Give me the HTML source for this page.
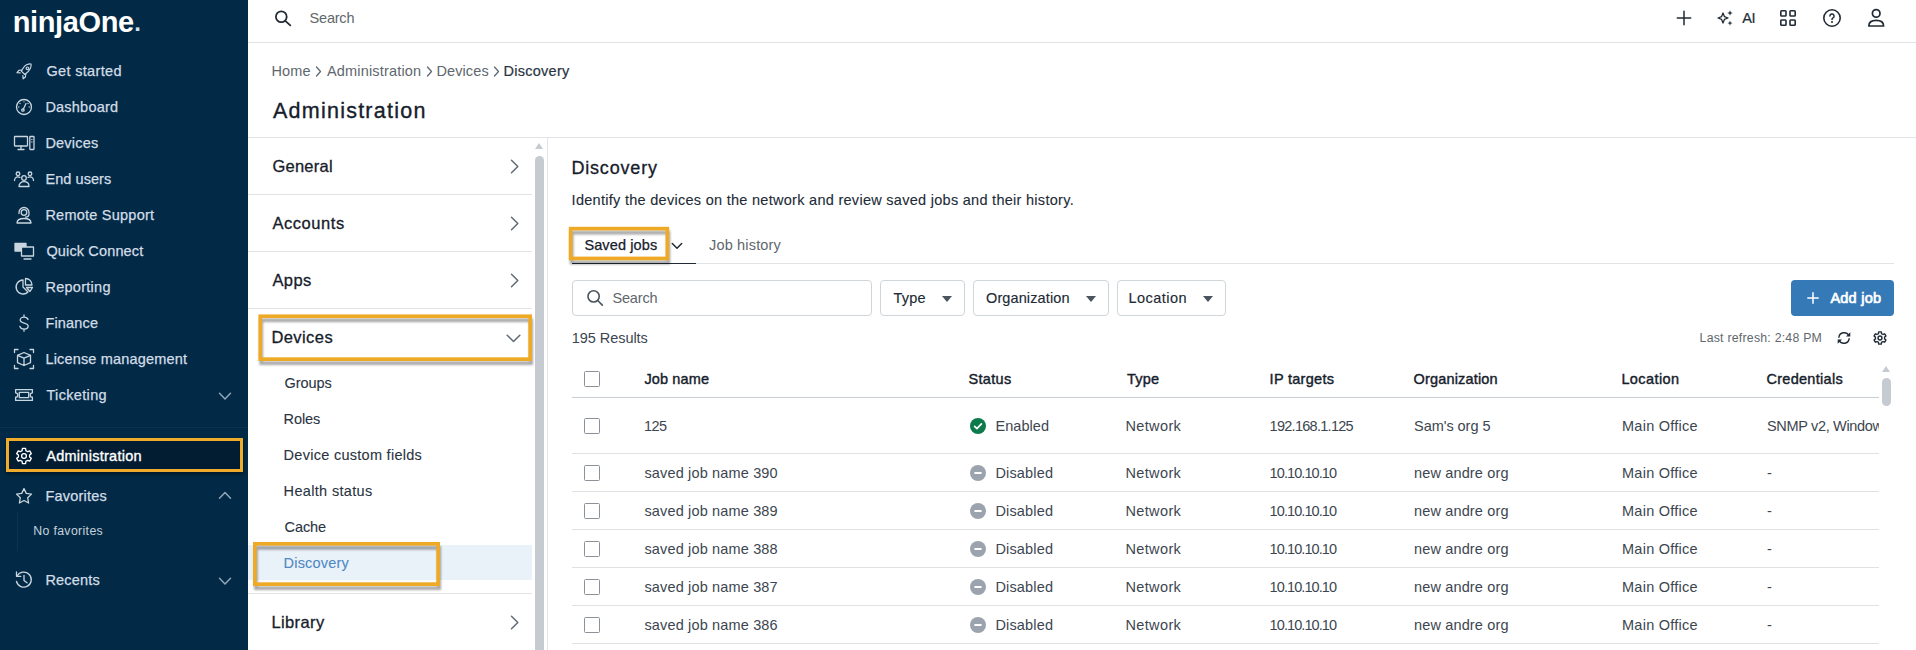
<!DOCTYPE html>
<html lang="en"><head><meta charset="utf-8"><title>Discovery - Administration</title>
<style>
*{box-sizing:border-box;margin:0;padding:0}
html,body{width:1916px;height:650px;overflow:hidden;background:#fff}
body{font-family:"Liberation Sans",Arial,sans-serif;color:#212b36;position:relative;font-size:14.5px}
.t{position:absolute;white-space:nowrap;line-height:20px;height:20px}
.a{position:absolute}
#side{position:absolute;left:0;top:0;width:248px;height:650px;background:#022a46}
.ico{position:absolute;left:13px;width:22px;height:22px;stroke:#c9d6e0;fill:none;stroke-width:1.3;stroke-linecap:round;stroke-linejoin:round}
.chev{position:absolute;fill:none;stroke-width:1.5;stroke-linecap:round;stroke-linejoin:round}
.hico{position:absolute;stroke:#212b36;fill:none;stroke-width:1.6;stroke-linecap:round;stroke-linejoin:round}
.line{position:absolute;background:#e1e3e6;height:1px}
.hls{position:absolute;overflow:visible;filter:drop-shadow(1.5px 4.5px 1.2px rgba(0,0,0,.34))}
.cb{position:absolute;left:584px;width:16px;height:16px;border:1px solid #8a9199;border-radius:1.5px;background:#fff}
.rl{position:absolute;left:572px;width:1307px;height:1px;background:#dfe1e4}
.dd{position:absolute;top:280px;height:36px;border:1px solid #d0d5da;border-radius:4px;background:#fff}
.dd i{position:absolute;right:12px;top:15px;border-left:5px solid transparent;border-right:5px solid transparent;border-top:6px solid #4a545e}
</style></head><body>
<div id="side">
<svg class="ico" style="top:60px" viewBox="0 0 22 22"><g transform="translate(11.300 11.500) scale(.9) translate(-11 -11)"><path d="M13.5 3.500c3-1.200 5-.8 5-.8s.5 2.200-.8 5c-1.200 2.600-4 5.300-6.200 6.600l-3.800-3.800c1.300-2.200 3.200-5.800 5.800-7z"/><circle cx="14.500" cy="7.500" r="1.500"/><path d="M8.500 9.300l-3.600.5-2 2.500 3.500.3M12.700 13.500l-.5 3.600-2.500 2-.3-3.500"/></g></svg>
<svg class="ico" style="top:96px" viewBox="0 0 22 22"><circle cx="11" cy="11" r="7.500"/><path d="M10.300 13.200l2.700-5.700"/><circle cx="9.900" cy="14" r="1.200"/><path d="M5.800 11h.01M7 7.500h.01M11 5.800h.01M16.200 11h.01M15 7.500h.01"/></svg>
<svg class="ico" style="top:132px" viewBox="0 0 22 22"><rect x="1.500" y="4.500" width="13" height="9.500" rx="0.500"/><path d="M5 17.500h6M8 14v3.500"/><rect x="16.800" y="4.500" width="4.200" height="13" rx="0.500"/><path d="M18.900 7.500h.01M18.900 10h.01"/></svg>
<svg class="ico" style="top:168px" viewBox="0 0 22 22"><circle cx="11" cy="10" r="2.300"/><path d="M6 18.500c0-3 2.200-4.800 5-4.800s5 1.800 5 4.800z"/><circle cx="5" cy="5.800" r="1.800"/><circle cx="17" cy="5.800" r="1.800"/><path d="M1.500 12.500c0-2 1.500-3.700 3.500-3.700 .8 0 1.500.2 2 .6M20.500 12.500c0-2-1.500-3.700-3.500-3.700-.8 0-1.500.2-2 .6"/></svg>
<svg class="ico" style="top:204px" viewBox="0 0 22 22"><circle cx="11" cy="8.500" r="2.800"/><path d="M6 9.500v-1a5 5 0 0 1 10 0v1M16 10c0 2-1.500 3-3.500 3.200"/><path d="M4 19c0-3 3-4.500 7-4.500s7 1.500 7 4.500z"/></svg>
<svg class="ico" style="top:240px" viewBox="0 0 22 22"><rect x="2" y="3.500" width="11" height="7.500" fill="#c9d6e0"/><rect x="8.500" y="7" width="12" height="9" fill="#022a46"/><path d="M11 19h7"/></svg>
<svg class="ico" style="top:276px" viewBox="0 0 22 22"><path d="M10 4a7 7 0 1 0 5 12l-5-5z"/><path d="M12.500 2.500v6.500h6.500a6.500 6.500 0 0 0-6.500-6.500zM13.500 11.500h6l-2.500 4z"/></svg>
<svg class="ico" style="top:312px" viewBox="0 0 22 22"><path d="M15 7.500c-.5-1.500-2-2.300-4-2.300-2.200 0-3.800 1.100-3.800 2.900 0 4 8 2 8 6 0 1.800-1.700 3-4 3-2.200 0-3.800-1-4.300-2.700M11 3v2.200M11 17v2.200"/></svg>
<svg class="ico" style="top:348px" viewBox="0 0 22 22"><path d="M1.500 4.500v-3h3.500M17 1.500h3.500v3M20.500 17.500v3h-3.500M5 20.500h-3.500v-3"/><path d="M11 4.500l6.500 2.800v7.400l-6.500 2.800-6.500-2.800v-7.400zM4.500 7.300l6.500 2.900 6.500-2.900M11 10.200v7.300"/></svg>
<svg class="ico" style="top:384px" viewBox="0 0 22 22"><path d="M2.600 5.600h16.800v3.200a2.200 2.200 0 0 0 0 4.400v3.200h-16.800v-3.200a2.200 2.200 0 0 0 0-4.400z"/><rect x="6.300" y="8.300" width="9.400" height="5.400"/></svg>
<svg class="chev" style="left:218px;top:392px;width:14px;height:8.500px;stroke:#8fa6b8" viewBox="0 0 14 8.500"><path d="M1.500 1.300l5.500 5.700 5.500-5.700"/></svg>
<div class="a" style="left:0;top:427px;width:248px;height:1px;background:#17395280"></div>
<div class="a" style="left:6px;top:438px;width:237px;height:34px;border:3.400px solid #efab2b;background:#021c31;box-shadow:0 2px 4px rgba(0,0,0,.5)"></div>
<svg class="ico" style="top:445px;stroke:#fff" viewBox="0 0 22 22"><path d="M12.86 5.61 L12.60 3.47 L9.40 3.47 L9.14 5.61 L7.26 6.70 L5.28 5.85 L3.68 8.62 L5.40 9.91 L5.40 12.09 L3.68 13.38 L5.28 16.15 L7.26 15.30 L9.14 16.39 L9.40 18.53 L12.60 18.53 L12.86 16.39 L14.74 15.30 L16.72 16.15 L18.32 13.38 L16.60 12.09 L16.60 9.91 L18.32 8.62 L16.72 5.85 L14.74 6.70z"/><circle cx="11" cy="11" r="2.400"/></svg>
<svg class="ico" style="top:485px" viewBox="0 0 22 22"><path d="M11 3.600l2.300 4.800 5.200.7-3.800 3.700.9 5.200-4.600-2.500-4.600 2.500.9-5.200-3.800-3.700 5.200-.7z"/></svg>
<svg class="chev" style="left:218px;top:491px;width:14px;height:8.500px;stroke:#8fa6b8" viewBox="0 0 14 8.500"><path d="M1.500 7.200l5.500-5.700 5.500 5.700"/></svg>
<div class="a" style="left:17px;top:512px;width:1px;height:39px;background:#10334c"></div>
<svg class="ico" style="top:569px" viewBox="0 0 22 22"><path d="M4.200 7a7.500 7.500 0 1 1-.7 5.500"/><path d="M3.500 3v4.300h4.300M11 6.500v5l3 2.300"/></svg>
<svg class="chev" style="left:218px;top:577px;width:14px;height:8.500px;stroke:#8fa6b8" viewBox="0 0 14 8.500"><path d="M1.500 1.300l5.500 5.700 5.500-5.700"/></svg>
</div>
<div class="line" style="left:248px;top:42px;width:1668px"></div>
<svg class="hico" style="left:273px;top:9px;width:20px;height:20px;stroke-width:1.800" viewBox="0 0 20 20"><circle cx="8.300" cy="7.800" r="5.400"/><path d="M12.300 11.800l5 4.600"/></svg>
<svg class="hico" style="left:1676px;top:10px;width:16px;height:16px;stroke-width:1.500" viewBox="0 0 16 16"><path d="M8 1.300v13.400M1.300 8h13.400"/></svg>
<svg class="hico" style="left:1716px;top:9px;width:18px;height:18px;stroke-width:1.300" viewBox="0 0 18 18"><path d="M7 4l1.400 3.600 3.600 1.400-3.600 1.400-1.400 3.600-1.400-3.600-3.600-1.400 3.600-1.400z"/><path d="M14 1.200l.75 2.050 2.050.75-2.050.75-.75 2.050-.75-2.050-2.050-.75 2.050-.75zM14 11.500l.7 1.900 1.900.7-1.900.7-.7 1.900-.7-1.900-1.900-.7 1.900-.7z" fill="#212b36" stroke="none"/></svg>
<svg class="hico" style="left:1779px;top:9px;width:18px;height:18px;stroke-width:1.600" viewBox="0 0 18 18"><rect x="1.800" y="1.800" width="5.200" height="5.200" rx="0.800"/><rect x="11" y="1.800" width="5.200" height="5.200" rx="0.800"/><rect x="1.800" y="11" width="5.200" height="5.200" rx="0.800"/><rect x="11" y="11" width="5.200" height="5.200" rx="0.800"/></svg>
<svg class="hico" style="left:1822px;top:8px;width:20px;height:20px;stroke-width:1.600" viewBox="0 0 20 20"><circle cx="10" cy="10" r="8.200"/><path d="M7.900 8a2.100 2.100 0 1 1 3.100 1.900c-.7.400-1 .8-1 1.500" stroke-width="1.500"/><circle cx="10" cy="13.900" r="1" fill="#212b36" stroke="none"/></svg>
<svg class="hico" style="left:1866px;top:8px;width:20px;height:20px;stroke-width:1.700" viewBox="0 0 20 20"><circle cx="10.200" cy="5.400" r="3.800"/><path d="M2.800 18c0-3.600 3-5.600 7.400-5.600s7.400 2 7.400 5.600z"/></svg>
<svg class="chev" style="left:315px;top:66px;width:7px;height:11px;stroke:#5f6a75;stroke-width:1.300" viewBox="0 0 7 11"><path d="M1.500 1l4 4.500-4 4.500"/></svg>
<svg class="chev" style="left:426px;top:66px;width:7px;height:11px;stroke:#5f6a75;stroke-width:1.300" viewBox="0 0 7 11"><path d="M1.500 1l4 4.500-4 4.500"/></svg>
<svg class="chev" style="left:493px;top:66px;width:7px;height:11px;stroke:#5f6a75;stroke-width:1.300" viewBox="0 0 7 11"><path d="M1.500 1l4 4.500-4 4.500"/></svg>
<div class="line" style="left:248px;top:137px;width:1668px"></div>
<svg class="chev" style="left:510px;top:159px;width:10px;height:15px;stroke:#5f6a75" viewBox="0 0 10 15"><path d="M1.500 1.200l6.300 6.300-6.300 6.300"/></svg>
<svg class="chev" style="left:510px;top:216px;width:10px;height:15px;stroke:#5f6a75" viewBox="0 0 10 15"><path d="M1.500 1.200l6.300 6.300-6.300 6.300"/></svg>
<svg class="chev" style="left:510px;top:273px;width:10px;height:15px;stroke:#5f6a75" viewBox="0 0 10 15"><path d="M1.500 1.200l6.300 6.300-6.300 6.300"/></svg>
<svg class="chev" style="left:510px;top:615px;width:10px;height:15px;stroke:#5f6a75" viewBox="0 0 10 15"><path d="M1.500 1.200l6.300 6.300-6.300 6.300"/></svg>
<svg class="chev" style="left:506px;top:333.500px;width:15px;height:9px;stroke:#5f6a75" viewBox="0 0 15 9"><path d="M1.200 1.200l6.300 6.300 6.300-6.300"/></svg>
<div class="line" style="left:248px;top:194px;width:284px"></div>
<div class="line" style="left:248px;top:251px;width:284px"></div>
<div class="line" style="left:248px;top:308px;width:284px"></div>
<div class="line" style="left:248px;top:593px;width:284px"></div>
<div class="a" style="left:248px;top:545px;width:284px;height:35px;background:#e9f1f9"></div>
<svg class="hls" style="left:256px;top:312px;width:285px;height:58px" viewBox="0 0 285 58"><rect x="4.25" y="4.25" width="269.90" height="42.90" rx="0" fill="none" stroke="#eeaa27" stroke-width="3.7"/></svg>
<svg class="hls" style="left:251px;top:540px;width:199px;height:56px" viewBox="0 0 199 56"><rect x="3.85" y="3.85" width="183.30" height="40.30" rx="0" fill="none" stroke="#eeaa27" stroke-width="3.7"/></svg>
<div class="a" style="left:535px;top:156px;width:9px;height:494px;background:#c6cbd1;border-radius:5px 5px 0 0"></div>
<div class="a" style="left:534.800px;top:143px;border-left:4.700px solid transparent;border-right:4.700px solid transparent;border-bottom:6.800px solid #c6cbd1"></div>
<div class="a" style="left:547px;top:138px;width:1px;height:512px;background:#e1e5e9"></div>
<svg class="chev" style="left:671px;top:242px;width:12px;height:8px;stroke:#212b36;stroke-width:1.500" viewBox="0 0 12 8"><path d="M1.300 1.500l4.700 4.700 4.700-4.700"/></svg>
<div class="line" style="left:572px;top:263px;width:1322px"></div>
<div class="a" style="left:572px;top:262.700px;width:124px;height:1.500px;background:#212b36"></div>
<svg class="hls" style="left:566px;top:224px;width:112px;height:45px" viewBox="0 0 112 45"><rect x="4.65" y="4.65" width="96.70" height="29.80" rx="0" fill="none" stroke="#eeaa27" stroke-width="3.7"/></svg>
<div class="dd" style="left:572px;width:300px"></div>
<svg class="hico" style="left:585px;top:288px;width:20px;height:20px;stroke:#4a545e;stroke-width:1.600" viewBox="0 0 20 20"><circle cx="8.600" cy="8.400" r="5.600"/><path d="M12.700 12.500l4.600 4.600"/></svg>
<div class="dd" style="left:880px;width:85px"><i></i></div>
<div class="dd" style="left:973px;width:136px"><i></i></div>
<div class="dd" style="left:1117px;width:109px"><i></i></div>
<div class="a" style="left:1791px;top:280px;width:103px;height:36px;background:#3579b7;border-radius:4px"></div>
<svg class="hico" style="left:1806.500px;top:292px;width:12px;height:12px;stroke:#fff;stroke-width:1.500" viewBox="0 0 12 12"><path d="M6 0.800v10.400M0.800 6h10.400"/></svg>
<svg class="hico" style="left:1836px;top:330px;width:16px;height:16px;stroke-width:1.400" viewBox="0 0 16 16"><path d="M2.900 7.200A5.300 5.300 0 0 1 12.800 5.500M13.100 8.800A5.300 5.300 0 0 1 3.200 10.500"/><path d="M14.300 2.200v4.300h-4.300zM1.700 13.800v-4.300h4.300z" fill="#212b36" stroke="none"/></svg>
<svg class="hico" style="left:1871px;top:329px;width:18px;height:18px;stroke-width:1.700" viewBox="0 0 22 22"><path d="M12.86 5.61 L12.60 3.47 L9.40 3.47 L9.14 5.61 L7.26 6.70 L5.28 5.85 L3.68 8.62 L5.40 9.91 L5.40 12.09 L3.68 13.38 L5.28 16.15 L7.26 15.30 L9.14 16.39 L9.40 18.53 L12.60 18.53 L12.86 16.39 L14.74 15.30 L16.72 16.15 L18.32 13.38 L16.60 12.09 L16.60 9.91 L18.32 8.62 L16.72 5.85 L14.74 6.70z"/><circle cx="11" cy="11" r="2.400"/></svg>
<div class="cb" style="top:371px"></div>
<div class="rl" style="top:397px;background:#c9ced4"></div>
<div class="cb" style="top:418px"></div>
<svg class="a" style="left:970px;top:418px;width:16px;height:16px" viewBox="0 0 16 16"><circle cx="8" cy="8" r="8" fill="#0c7a4c"/><path d="M4.600 8.300l2.300 2.300 4.500-4.800" fill="none" stroke="#fff" stroke-width="1.700" stroke-linecap="round" stroke-linejoin="round"/></svg>
<div class="cb" style="top:465px"></div>
<svg class="a" style="left:970px;top:465px;width:16px;height:16px" viewBox="0 0 16 16"><circle cx="8" cy="8" r="8" fill="#9ba4ae"/><path d="M5.200 8h5.600" stroke="#fff" stroke-width="2" stroke-linecap="round"/></svg>
<div class="cb" style="top:503px"></div>
<svg class="a" style="left:970px;top:503px;width:16px;height:16px" viewBox="0 0 16 16"><circle cx="8" cy="8" r="8" fill="#9ba4ae"/><path d="M5.200 8h5.600" stroke="#fff" stroke-width="2" stroke-linecap="round"/></svg>
<div class="cb" style="top:541px"></div>
<svg class="a" style="left:970px;top:541px;width:16px;height:16px" viewBox="0 0 16 16"><circle cx="8" cy="8" r="8" fill="#9ba4ae"/><path d="M5.200 8h5.600" stroke="#fff" stroke-width="2" stroke-linecap="round"/></svg>
<div class="cb" style="top:579px"></div>
<svg class="a" style="left:970px;top:579px;width:16px;height:16px" viewBox="0 0 16 16"><circle cx="8" cy="8" r="8" fill="#9ba4ae"/><path d="M5.200 8h5.600" stroke="#fff" stroke-width="2" stroke-linecap="round"/></svg>
<div class="cb" style="top:617px"></div>
<svg class="a" style="left:970px;top:617px;width:16px;height:16px" viewBox="0 0 16 16"><circle cx="8" cy="8" r="8" fill="#9ba4ae"/><path d="M5.200 8h5.600" stroke="#fff" stroke-width="2" stroke-linecap="round"/></svg>
<div class="rl" style="top:453px"></div>
<div class="rl" style="top:491px"></div>
<div class="rl" style="top:529px"></div>
<div class="rl" style="top:567px"></div>
<div class="rl" style="top:605px"></div>
<div class="rl" style="top:643px"></div>
<div class="a" style="left:1882px;top:366px;border-left:4.500px solid transparent;border-right:4.500px solid transparent;border-bottom:6px solid #c6cbd1"></div>
<div class="a" style="left:1882px;top:378px;width:9px;height:28px;background:#c6cbd1;border-radius:5px"></div>
<div class="t" style="left:12.80px;top:11.65px;font-size:29px;color:#ffffff;letter-spacing:-0.392px;font-weight:bold">ninjaOne</div>
<div class="t" style="left:134.30px;top:13.38px;font-size:24px;color:#cfe0ee;letter-spacing:0.000px;font-weight:bold">.</div>
<div class="t" style="left:46.40px;top:60.98px;font-size:14.5px;color:#d3dde6;letter-spacing:0.334px;-webkit-text-stroke:0.25px #d3dde6">Get started</div>
<div class="t" style="left:45.40px;top:96.98px;font-size:14.5px;color:#d3dde6;letter-spacing:0.216px;-webkit-text-stroke:0.25px #d3dde6">Dashboard</div>
<div class="t" style="left:45.40px;top:132.98px;font-size:14.5px;color:#d3dde6;letter-spacing:0.213px;-webkit-text-stroke:0.25px #d3dde6">Devices</div>
<div class="t" style="left:45.40px;top:168.98px;font-size:14.5px;color:#d3dde6;letter-spacing:0.071px;-webkit-text-stroke:0.25px #d3dde6">End users</div>
<div class="t" style="left:45.40px;top:204.98px;font-size:14.5px;color:#d3dde6;letter-spacing:0.234px;-webkit-text-stroke:0.25px #d3dde6">Remote Support</div>
<div class="t" style="left:46.40px;top:240.98px;font-size:14.5px;color:#d3dde6;letter-spacing:0.144px;-webkit-text-stroke:0.25px #d3dde6">Quick Connect</div>
<div class="t" style="left:45.40px;top:276.98px;font-size:14.5px;color:#d3dde6;letter-spacing:0.274px;-webkit-text-stroke:0.25px #d3dde6">Reporting</div>
<div class="t" style="left:45.40px;top:312.98px;font-size:14.5px;color:#d3dde6;letter-spacing:0.180px;-webkit-text-stroke:0.25px #d3dde6">Finance</div>
<div class="t" style="left:45.40px;top:348.98px;font-size:14.5px;color:#d3dde6;letter-spacing:0.176px;-webkit-text-stroke:0.25px #d3dde6">License management</div>
<div class="t" style="left:46.40px;top:384.98px;font-size:14.5px;color:#d3dde6;letter-spacing:0.348px;-webkit-text-stroke:0.25px #d3dde6">Ticketing</div>
<div class="t" style="left:45.40px;top:485.98px;font-size:14.5px;color:#d3dde6;letter-spacing:0.228px;-webkit-text-stroke:0.25px #d3dde6">Favorites</div>
<div class="t" style="left:45.40px;top:569.98px;font-size:14.5px;color:#d3dde6;letter-spacing:0.176px;-webkit-text-stroke:0.25px #d3dde6">Recents</div>
<div class="t" style="left:46.20px;top:445.98px;font-size:14.5px;color:#ffffff;letter-spacing:0.276px;-webkit-text-stroke:0.35px #ffffff">Administration</div>
<div class="t" style="left:33.20px;top:520.74px;font-size:12.3px;color:#c5d1dc;letter-spacing:0.358px">No favorites</div>
<div class="t" style="left:309.60px;top:7.98px;font-size:14.5px;color:#60676e;letter-spacing:-0.216px">Search</div>
<div class="t" style="left:1742.30px;top:7.98px;font-size:14.5px;color:#212b36;letter-spacing:-0.571px;-webkit-text-stroke:0.2px #212b36">AI</div>
<div class="t" style="left:271.40px;top:60.98px;font-size:14.5px;color:#60676e;letter-spacing:0.195px">Home</div>
<div class="t" style="left:327.00px;top:60.98px;font-size:14.5px;color:#60676e;letter-spacing:0.169px">Administration</div>
<div class="t" style="left:436.40px;top:60.98px;font-size:14.5px;color:#60676e;letter-spacing:0.113px">Devices</div>
<div class="t" style="left:503.40px;top:60.98px;font-size:14.5px;color:#2a343f;letter-spacing:0.275px;-webkit-text-stroke:0.2px #2a343f">Discovery</div>
<div class="t" style="left:273.00px;top:100.55px;font-size:21.5px;color:#16202b;letter-spacing:1.241px;-webkit-text-stroke:0.35px #16202b">Administration</div>
<div class="t" style="left:272.40px;top:156.28px;font-size:16.5px;color:#16202b;letter-spacing:0.261px;-webkit-text-stroke:0.3px #16202b">General</div>
<div class="t" style="left:272.40px;top:213.28px;font-size:16.5px;color:#16202b;letter-spacing:0.569px;-webkit-text-stroke:0.3px #16202b">Accounts</div>
<div class="t" style="left:272.40px;top:270.28px;font-size:16.5px;color:#16202b;letter-spacing:0.414px;-webkit-text-stroke:0.3px #16202b">Apps</div>
<div class="t" style="left:271.40px;top:327.28px;font-size:16.5px;color:#16202b;letter-spacing:0.428px;-webkit-text-stroke:0.3px #16202b">Devices</div>
<div class="t" style="left:271.40px;top:612.28px;font-size:16.5px;color:#16202b;letter-spacing:0.403px;-webkit-text-stroke:0.3px #16202b">Library</div>
<div class="t" style="left:284.60px;top:372.98px;font-size:14.5px;color:#2a343f;letter-spacing:-0.100px;-webkit-text-stroke:0.1px #2a343f">Groups</div>
<div class="t" style="left:283.60px;top:408.98px;font-size:14.5px;color:#2a343f;letter-spacing:-0.105px;-webkit-text-stroke:0.1px #2a343f">Roles</div>
<div class="t" style="left:283.60px;top:444.98px;font-size:14.5px;color:#2a343f;letter-spacing:0.278px;-webkit-text-stroke:0.1px #2a343f">Device custom fields</div>
<div class="t" style="left:283.60px;top:480.98px;font-size:14.5px;color:#2a343f;letter-spacing:0.335px;-webkit-text-stroke:0.1px #2a343f">Health status</div>
<div class="t" style="left:284.60px;top:516.98px;font-size:14.5px;color:#2a343f;letter-spacing:-0.112px;-webkit-text-stroke:0.1px #2a343f">Cache</div>
<div class="t" style="left:283.60px;top:552.98px;font-size:14.5px;color:#4f89c4;letter-spacing:0.175px;-webkit-text-stroke:0.1px #4f89c4">Discovery</div>
<div class="t" style="left:571.40px;top:157.76px;font-size:18px;color:#16202b;letter-spacing:0.823px;-webkit-text-stroke:0.3px #16202b">Discovery</div>
<div class="t" style="left:571.60px;top:189.98px;font-size:14.5px;color:#212b36;letter-spacing:0.282px;-webkit-text-stroke:0.1px #212b36">Identify the devices on the network and review saved jobs and their history.</div>
<div class="t" style="left:584.40px;top:234.98px;font-size:14.5px;color:#16202b;letter-spacing:0.123px;-webkit-text-stroke:0.25px #16202b">Saved jobs</div>
<div class="t" style="left:709.00px;top:234.98px;font-size:14.5px;color:#60676e;letter-spacing:0.174px">Job history</div>
<div class="t" style="left:612.40px;top:287.98px;font-size:14.5px;color:#60676e;letter-spacing:-0.136px">Search</div>
<div class="t" style="left:893.60px;top:287.98px;font-size:14.5px;color:#212b36;letter-spacing:0.143px;-webkit-text-stroke:0.15px #212b36">Type</div>
<div class="t" style="left:986.00px;top:287.98px;font-size:14.5px;color:#212b36;letter-spacing:0.114px;-webkit-text-stroke:0.15px #212b36">Organization</div>
<div class="t" style="left:1128.60px;top:287.98px;font-size:14.5px;color:#212b36;letter-spacing:0.435px;-webkit-text-stroke:0.15px #212b36">Location</div>
<div class="t" style="left:1830.40px;top:287.98px;font-size:14.5px;color:#ffffff;letter-spacing:0.248px;-webkit-text-stroke:0.7px #ffffff">Add job</div>
<div class="t" style="left:571.80px;top:327.98px;font-size:14.5px;color:#3c4650;letter-spacing:-0.052px">195 Results</div>
<div class="t" style="left:1699.60px;top:328.14px;font-size:12.3px;color:#60676e;letter-spacing:0.234px">Last refresh: 2:48 PM</div>
<div class="t" style="left:644.40px;top:368.98px;font-size:14.5px;color:#16202b;letter-spacing:0.141px;-webkit-text-stroke:0.4px #16202b">Job name</div>
<div class="t" style="left:968.40px;top:368.98px;font-size:14.5px;color:#16202b;letter-spacing:0.349px;-webkit-text-stroke:0.4px #16202b">Status</div>
<div class="t" style="left:1127.00px;top:368.98px;font-size:14.5px;color:#16202b;letter-spacing:0.210px;-webkit-text-stroke:0.4px #16202b">Type</div>
<div class="t" style="left:1269.60px;top:368.98px;font-size:14.5px;color:#16202b;letter-spacing:0.288px;-webkit-text-stroke:0.4px #16202b">IP targets</div>
<div class="t" style="left:1413.60px;top:368.98px;font-size:14.5px;color:#16202b;letter-spacing:0.168px;-webkit-text-stroke:0.4px #16202b">Organization</div>
<div class="t" style="left:1621.40px;top:368.98px;font-size:14.5px;color:#16202b;letter-spacing:0.406px;-webkit-text-stroke:0.4px #16202b">Location</div>
<div class="t" style="left:1766.40px;top:368.98px;font-size:14.5px;color:#16202b;letter-spacing:0.291px;-webkit-text-stroke:0.4px #16202b">Credentials</div>
<div class="t" style="left:644.00px;top:415.98px;font-size:14.5px;color:#3c4650;letter-spacing:-0.564px">125</div>
<div class="t" style="left:995.40px;top:415.98px;font-size:14.5px;color:#3c4650;letter-spacing:0.075px">Enabled</div>
<div class="t" style="left:1269.60px;top:415.98px;font-size:14.5px;color:#3c4650;letter-spacing:-0.722px">192.168.1.125</div>
<div class="t" style="left:1414.00px;top:415.98px;font-size:14.5px;color:#3c4650;letter-spacing:-0.045px">Sam's org 5</div>
<div class="t" style="left:1767.00px;top:415.98px;font-size:14.5px;color:#3c4650;letter-spacing:-0.333px;width:111.6px;overflow:hidden">SNMP v2, Windows</div>
<div class="t" style="left:1125.40px;top:415.98px;font-size:14.5px;color:#3c4650;letter-spacing:0.379px">Network</div>
<div class="t" style="left:1622.00px;top:415.98px;font-size:14.5px;color:#3c4650;letter-spacing:0.260px">Main Office</div>
<div class="t" style="left:644.40px;top:462.98px;font-size:14.5px;color:#3c4650;letter-spacing:0.157px">saved job name 390</div>
<div class="t" style="left:995.40px;top:462.98px;font-size:14.5px;color:#3c4650;letter-spacing:0.178px">Disabled</div>
<div class="t" style="left:1269.60px;top:462.98px;font-size:14.5px;color:#3c4650;letter-spacing:-0.914px">10.10.10.10</div>
<div class="t" style="left:1414.00px;top:462.98px;font-size:14.5px;color:#3c4650;letter-spacing:0.147px">new andre org</div>
<div class="t" style="left:1767.00px;top:462.98px;font-size:14.5px;color:#3c4650;letter-spacing:0.000px">-</div>
<div class="t" style="left:1125.40px;top:462.98px;font-size:14.5px;color:#3c4650;letter-spacing:0.379px">Network</div>
<div class="t" style="left:1622.00px;top:462.98px;font-size:14.5px;color:#3c4650;letter-spacing:0.260px">Main Office</div>
<div class="t" style="left:644.40px;top:500.98px;font-size:14.5px;color:#3c4650;letter-spacing:0.157px">saved job name 389</div>
<div class="t" style="left:995.40px;top:500.98px;font-size:14.5px;color:#3c4650;letter-spacing:0.178px">Disabled</div>
<div class="t" style="left:1269.60px;top:500.98px;font-size:14.5px;color:#3c4650;letter-spacing:-0.914px">10.10.10.10</div>
<div class="t" style="left:1414.00px;top:500.98px;font-size:14.5px;color:#3c4650;letter-spacing:0.147px">new andre org</div>
<div class="t" style="left:1767.00px;top:500.98px;font-size:14.5px;color:#3c4650;letter-spacing:0.000px">-</div>
<div class="t" style="left:1125.40px;top:500.98px;font-size:14.5px;color:#3c4650;letter-spacing:0.379px">Network</div>
<div class="t" style="left:1622.00px;top:500.98px;font-size:14.5px;color:#3c4650;letter-spacing:0.260px">Main Office</div>
<div class="t" style="left:644.40px;top:538.98px;font-size:14.5px;color:#3c4650;letter-spacing:0.157px">saved job name 388</div>
<div class="t" style="left:995.40px;top:538.98px;font-size:14.5px;color:#3c4650;letter-spacing:0.178px">Disabled</div>
<div class="t" style="left:1269.60px;top:538.98px;font-size:14.5px;color:#3c4650;letter-spacing:-0.914px">10.10.10.10</div>
<div class="t" style="left:1414.00px;top:538.98px;font-size:14.5px;color:#3c4650;letter-spacing:0.147px">new andre org</div>
<div class="t" style="left:1767.00px;top:538.98px;font-size:14.5px;color:#3c4650;letter-spacing:0.000px">-</div>
<div class="t" style="left:1125.40px;top:538.98px;font-size:14.5px;color:#3c4650;letter-spacing:0.379px">Network</div>
<div class="t" style="left:1622.00px;top:538.98px;font-size:14.5px;color:#3c4650;letter-spacing:0.260px">Main Office</div>
<div class="t" style="left:644.40px;top:576.98px;font-size:14.5px;color:#3c4650;letter-spacing:0.157px">saved job name 387</div>
<div class="t" style="left:995.40px;top:576.98px;font-size:14.5px;color:#3c4650;letter-spacing:0.178px">Disabled</div>
<div class="t" style="left:1269.60px;top:576.98px;font-size:14.5px;color:#3c4650;letter-spacing:-0.914px">10.10.10.10</div>
<div class="t" style="left:1414.00px;top:576.98px;font-size:14.5px;color:#3c4650;letter-spacing:0.147px">new andre org</div>
<div class="t" style="left:1767.00px;top:576.98px;font-size:14.5px;color:#3c4650;letter-spacing:0.000px">-</div>
<div class="t" style="left:1125.40px;top:576.98px;font-size:14.5px;color:#3c4650;letter-spacing:0.379px">Network</div>
<div class="t" style="left:1622.00px;top:576.98px;font-size:14.5px;color:#3c4650;letter-spacing:0.260px">Main Office</div>
<div class="t" style="left:644.40px;top:614.98px;font-size:14.5px;color:#3c4650;letter-spacing:0.157px">saved job name 386</div>
<div class="t" style="left:995.40px;top:614.98px;font-size:14.5px;color:#3c4650;letter-spacing:0.178px">Disabled</div>
<div class="t" style="left:1269.60px;top:614.98px;font-size:14.5px;color:#3c4650;letter-spacing:-0.914px">10.10.10.10</div>
<div class="t" style="left:1414.00px;top:614.98px;font-size:14.5px;color:#3c4650;letter-spacing:0.147px">new andre org</div>
<div class="t" style="left:1767.00px;top:614.98px;font-size:14.5px;color:#3c4650;letter-spacing:0.000px">-</div>
<div class="t" style="left:1125.40px;top:614.98px;font-size:14.5px;color:#3c4650;letter-spacing:0.379px">Network</div>
<div class="t" style="left:1622.00px;top:614.98px;font-size:14.5px;color:#3c4650;letter-spacing:0.260px">Main Office</div>
</body></html>
